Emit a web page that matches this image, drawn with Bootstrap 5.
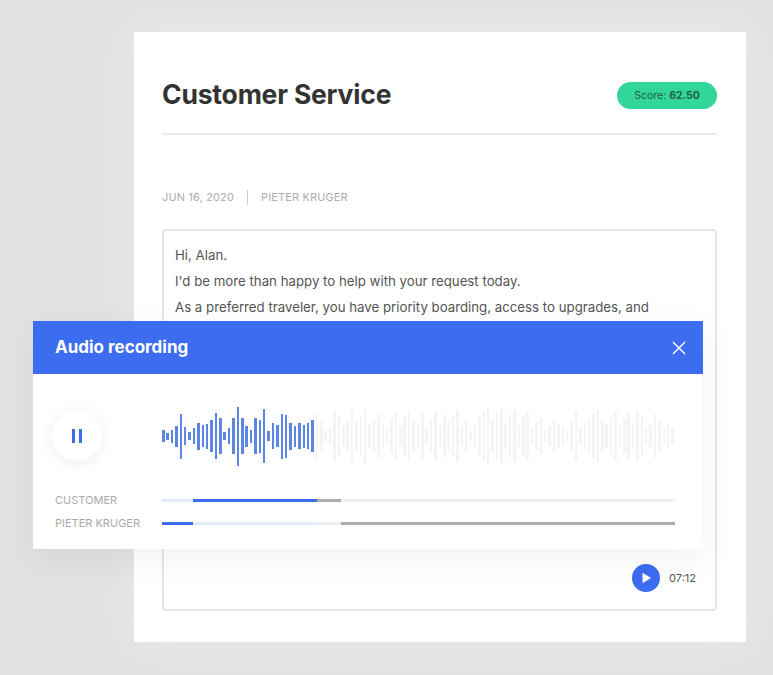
<!DOCTYPE html>
<html lang="en">

<head>
    <meta charset="UTF-8">
    <title>Customer Service</title>
    <link href="https://cdn.jsdelivr.net/npm/bootstrap@5.3.3/dist/css/bootstrap.min.css" rel="stylesheet">
    <style>
        body { background: #e2e2e2; font-family: "Inter", "Liberation Sans", sans-serif; height: 675px; overflow: hidden; }
        .stage { padding: 32px 27px 0 134px; position: relative; height: 675px; }
        .sheet { background: #fff; height: 610px; padding: 0 29px 32px 28px; box-shadow: 0 0 40px rgba(255,255,255,.35); }
        .sheet-head { height: 103px; padding-top: 45px; border-bottom: 2px solid #ebebeb; margin-bottom: 55px; }
        .sheet-title { font-size: 26.5px; font-weight: 700; color: #333; margin: 0; line-height: 34px; letter-spacing: -.2px; }
        .score-pill { background: #33d69a; color: #1f5f4a; font-size: 10.5px; width: 100px; height: 27px; margin-top: 5px; }
        .meta-row { font-size: 10.9px; color: #acacac; letter-spacing: .2px; height: 15px; margin-bottom: 24px; }
        .meta-sep { width: 1px; height: 15px; background: #ccc; margin: 0 13px; }
        .msg-box { border: 2px solid #e6e6e6; border-radius: 4px; height: 382px; padding: 11px 11px 17px; color: #555; font-size: 13.25px; }
        .msg-box p { margin: 0; line-height: 26px; }
        .play-btn { width: 28px; height: 28px; background: #3c6cf0; }
        .time-label { font-size: 11px; color: #555; margin-left: 9px; margin-right: 8px; }
        .audio-panel { position: absolute; left: 33px; top: 321px; width: 670px; height: 228px; background: #fff; box-shadow: 0 10px 36px rgba(0,0,0,.06); }
        .audio-head { height: 53px; background: #3c6cf0; color: #fff; padding: 0 16px 0 22px; }
        .audio-title { font-size: 17px; font-weight: 700; margin: 0; }
        .audio-wave-row { padding: 37px 0 0 19px; height: 115px; }
        .pause-btn { width: 50px; height: 50px; background: #fff; box-shadow: 0 2px 16px rgba(0,0,0,.08); margin-right: 60px; gap: 4px; flex: none; }
        .pause-btn i { display: block; width: 3px; height: 14px; background: #3c6cf0; }
        .wave { height: 50px; gap: 1.9px; width: 513px; }
        .wave span { display: block; width: 2.5px; flex: none; background: #5c85e6; }
        .wave span.later { background: #f4f4f2; }
        .track-row { height: 23px; padding-left: 22px; }
        .track-name { width: 107px; font-size: 11px; color: #aaa; }
        .track { width: 513px; height: 3px; }
        .track i { display: block; height: 3px; }
        .w1 { width: 31px; } .w2 { width: 124px; } .w3 { width: 24px; } .w4 { width: 334px; }
        .c-pale { background: #e5eafb; } .c-blue { background: #3c6cf0; } .c-grey { background: #adadad; }
        .c-faint { background: #f0f0f0; }
    </style>
</head>

<body>
    <div class="stage">
        <div class="sheet">
            <div class="sheet-head d-flex justify-content-between align-items-start">
                <h1 class="sheet-title">Customer Service</h1>
                <div class="score-pill rounded-pill d-flex align-items-center justify-content-center">
                    <span>Score: <b>62.50</b></span>
                </div>
            </div>
            <div class="meta-row d-flex align-items-center">
                <span>JUN 16, 2020</span>
                <span class="meta-sep"></span>
                <span>PIETER KRUGER</span>
            </div>
            <div class="msg-box d-flex flex-column justify-content-between">
                <div>
                    <p>Hi, Alan.</p>
                    <p>I'd be more than happy to help with your request today.</p>
                    <p>As a preferred traveler, you have priority boarding, access to upgrades, and</p>
                </div>
                <div class="d-flex justify-content-end align-items-center">
                    <span class="play-btn rounded-circle d-flex align-items-center justify-content-center">
                        <svg width="12" height="12" viewBox="0 0 12 12"><path d="M2.5 0.8 L11 6 L2.5 11.2 Z" fill="#fff"/></svg>
                    </span>
                    <span class="time-label">07:12</span>
                </div>
            </div>
        </div>

        <div class="audio-panel">
            <div class="audio-head d-flex justify-content-between align-items-center">
                <h2 class="audio-title">Audio recording</h2>
                <svg width="16" height="16" viewBox="0 0 16 16"><path d="M2 2 L14 14 M14 2 L2 14" stroke="#fff" stroke-width="1.5" fill="none"/></svg>
            </div>
            <div class="audio-wave-row d-flex align-items-start">
                <span class="pause-btn rounded-circle d-flex align-items-center justify-content-center"><i></i><i></i></span>
                <div id="wave" class="wave d-flex align-items-center"></div>
            </div>
            <div class="track-row d-flex align-items-center">
                <span class="track-name">CUSTOMER</span>
                <div class="track d-flex"><i class="w1 c-pale"></i><i class="w2 c-blue"></i><i class="w3 c-grey"></i><i class="w4 c-faint"></i></div>
            </div>
            <div class="track-row d-flex align-items-center">
                <span class="track-name">PIETER KRUGER</span>
                <div class="track d-flex"><i class="w1 c-blue"></i><i class="w2 c-pale"></i><i class="w3 c-faint"></i><i class="w4 c-grey"></i></div>
            </div>
        </div>
    </div>

    <script src="https://cdn.jsdelivr.net/npm/bootstrap@5.3.3/dist/js/bootstrap.bundle.min.js"></script>
    <script>
        // bar heights read off the waveform, played part first
        const played = [12,7,13,21,45,18,8,16,27,22,25,32,46,36,8,16,36,59,36,21,13,36,33,54,10,26,22,45,43,27,21,26,23,26,32];
        const later = [45,30,12,18,50,42,20,30,52,28,40,55,24,32,44,26,14,36,48,20,38,52,30,24,46,16,34,50,22,42,28,40,52,20,30,10,24,40,50,60,34,48,56,26,44,52,22,38,46,18,28,36,14,20,32,24,18,12,28,50,16,26,36,44,52,30,22,38,48,20,34,44,26,50,40,16,22,44,30,18,24,14];
        const wave = document.getElementById('wave');
        played.concat(later).forEach((h, i) => {
            const bar = document.createElement('span');
            bar.style.height = h + 'px';
            if (i >= played.length) bar.className = 'later';
            wave.appendChild(bar);
        });
    </script>
</body>

</html>
